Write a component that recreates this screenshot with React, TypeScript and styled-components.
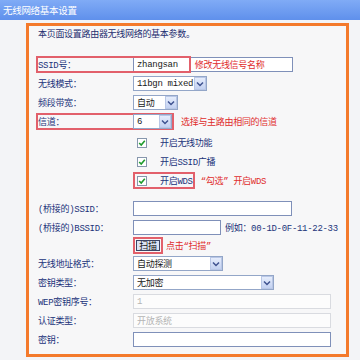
import React from "react";
import styled, { createGlobalStyle } from "styled-components";

const Global = createGlobalStyle`
  html, body { margin: 0; padding: 0; background: #f3f4f7; }
`;

const Page = styled.div`
  width: 360px;
  height: 360px;
  overflow: hidden;
  background: #f3f4f7;
  font-family: "Liberation Mono", "Noto Sans CJK SC", monospace;
  font-size: 9px;
  letter-spacing: -0.3px;
  color: #22337a;
`;

const Header = styled.div`
  height: 20px;
  line-height: 20px;
  padding-left: 3px;
  background: linear-gradient(#80abf6, #5f90ec);
  color: #fff;
  font-family: "Noto Sans CJK SC", sans-serif;
  font-size: 9.5px;
`;

const Frame = styled.div`
  margin: 3px 11px 0 26px;
  height: 334px;
  box-sizing: border-box;
  border: 3px solid #f47a2c;
  background: #f7f7f8;
  padding-left: 9px;
`;

const Desc = styled.div`
  height: 18px;
  line-height: 18px;
  margin-bottom: 11px;
  color: #1f2f70;
`;

const Row = styled.div<{ $h?: number; $mt?: number }>`
  position: relative;
  display: flex;
  align-items: center;
  height: ${(p) => p.$h ?? 19}px;
  margin-top: ${(p) => p.$mt ?? 0}px;
  white-space: nowrap;
`;

const Label = styled.div`
  width: 95px;
  flex: none;
  white-space: nowrap;
`;

const MarkBox = styled.div`
  display: flex;
  align-items: center;
  box-sizing: border-box;
  height: 17px;
  margin-left: -2px;
  border: 2px solid #e2606b;
`;

const Overlay = styled.div<{ $w: number }>`
  position: absolute;
  left: -2px;
  top: 1px;
  width: ${(p) => p.$w}px;
  height: 17px;
  box-sizing: border-box;
  border: 2px solid #e2606b;
  pointer-events: none;
`;

const Field = styled.div<{ $w: number; $off?: boolean }>`
  box-sizing: border-box;
  width: ${(p) => p.$w}px;
  height: 15px;
  flex: none;
  display: flex;
  align-items: center;
  padding-left: 3px;
  border: 1px solid ${(p) => (p.$off ? "#d9dbe0" : "#7f90b9")};
  background: ${(p) => (p.$off ? "#fcfcfc" : "#fff")};
  color: ${(p) => (p.$off ? "#b4b4b4" : "#1a1a1a")};
`;

const Select = styled.div<{ $w: number }>`
  box-sizing: border-box;
  width: ${(p) => p.$w}px;
  height: 15px;
  flex: none;
  display: flex;
  align-items: center;
  justify-content: space-between;
  padding-left: 3px;
  border: 1px solid #93a6c8;
  background: #fff;
  color: #1a1a1a;
`;

const ArrowBox = styled.span`
  width: 12px;
  height: 13px;
  box-sizing: border-box;
  border: 1px solid #b9c7e6;
  background: linear-gradient(#e6edfc, #c3d1f1);
  display: flex;
  align-items: center;
  justify-content: center;
`;

const Note = styled.span<{ $ml: number }>`
  margin-left: ${(p) => p.$ml}px;
  color: #e02c2c;
`;

const Hint = styled.span`
  margin-left: 4px;
  color: #22337a;
`;

const CheckItem = styled.div<{ $marked?: boolean }>`
  display: flex;
  align-items: center;
  gap: 13px;
  box-sizing: border-box;
  height: 17px;
  padding: 0 0 0 2px;
  border: 2px solid ${(p) => (p.$marked ? "#e2606b" : "transparent")};
`;

const Box = styled.span`
  width: 10px;
  height: 10px;
  box-sizing: border-box;
  border: 1px solid #8797ad;
  background: #fff;
  display: inline-flex;
  align-items: center;
  justify-content: center;
`;

const ScanMark = styled.div`
  box-sizing: border-box;
  height: 17px;
  padding: 1px;
  border: 2px solid #e2606b;
  display: flex;
  align-items: center;
`;

const ScanButton = styled.button`
  box-sizing: border-box;
  height: 11px;
  width: 24px;
  padding: 0;
  margin: 0;
  border: 1px solid #3c4464;
  background: #dce2f3;
  color: #111;
  font-family: "Noto Sans CJK SC", sans-serif;
  font-size: 9px;
  line-height: 9px;
  letter-spacing: -0.3px;
`;

const Chevron = () => (
  <svg width="8" height="6" viewBox="0 0 8 6">
    <path d="M1 1.5 L4 4.5 L7 1.5" fill="none" stroke="#3f5290" strokeWidth="1.5" />
  </svg>
);

const Check = () => (
  <svg width="8" height="8" viewBox="0 0 8 8">
    <path d="M1.2 4 L3.2 6 L6.8 1.8" fill="none" stroke="#1e9b2c" strokeWidth="1.6" />
  </svg>
);

const Dropdown = ({ w, children }: { w: number; children: React.ReactNode }) => (
  <Select $w={w}>
    <span>{children}</span>
    <ArrowBox>
      <Chevron />
    </ArrowBox>
  </Select>
);

const Option = ({ marked, children }: { marked?: boolean; children: React.ReactNode }) => (
  <CheckItem $marked={marked}>
    <Box>
      <Check />
    </Box>
    <span>{children}</span>
  </CheckItem>
);

const Spacer = styled.div`
  width: 95px;
  flex: none;
`;

export default function App() {
  return (
    <Page>
      <Global />
      <Header>无线网络基本设置</Header>
      <Frame>
        <Desc>本页面设置路由器无线网络的基本参数。</Desc>

        <Row>
          <Label>SSID号：</Label>
          <Field $w={160}>
            <span>zhangsan</span>
            <Note $ml={17}>修改无线信号名称</Note>
          </Field>
          <Overlay $w={155} />
        </Row>
        <Row>
          <Label>无线模式：</Label>
          <Dropdown w={74}>11bgn mixed</Dropdown>
        </Row>
        <Row>
          <Label>频段带宽：</Label>
          <Dropdown w={45}>自动</Dropdown>
        </Row>
        <Row>
          <MarkBox>
            <Label>信道：</Label>
            <Dropdown w={39}>6</Dropdown>
          </MarkBox>
          <Note $ml={7}>选择与主路由相同的信道</Note>
        </Row>

        <Row $mt={2}>
          <Spacer />
          <Option>开启无线功能</Option>
        </Row>
        <Row>
          <Spacer />
          <Option>开启SSID广播</Option>
        </Row>
        <Row>
          <Spacer />
          <Option marked>开启WDS</Option>
          <Note $ml={6}>“勾选” 开启WDS</Note>
        </Row>

        <Row $mt={9}>
          <Label>(桥接的)SSID：</Label>
          <Field $w={159} />
        </Row>
        <Row>
          <Label>(桥接的)BSSID：</Label>
          <Field $w={88} />
          <Hint>例如：00-1D-0F-11-22-33</Hint>
        </Row>
        <Row $h={17}>
          <Spacer />
          <ScanMark>
            <ScanButton>扫描</ScanButton>
          </ScanMark>
          <Note $ml={3}>点击“扫描”</Note>
        </Row>
        <Row>
          <Label>无线地址格式：</Label>
          <Dropdown w={90}>自动探测</Dropdown>
        </Row>
        <Row>
          <Label>密钥类型：</Label>
          <Dropdown w={141}>无加密</Dropdown>
        </Row>
        <Row>
          <Label>WEP密钥序号：</Label>
          <Field $w={198} $off>1</Field>
        </Row>
        <Row>
          <Label>认证类型：</Label>
          <Field $w={198} $off>开放系统</Field>
        </Row>
        <Row>
          <Label>密钥：</Label>
          <Field $w={198} />
        </Row>
      </Frame>
    </Page>
  );
}
